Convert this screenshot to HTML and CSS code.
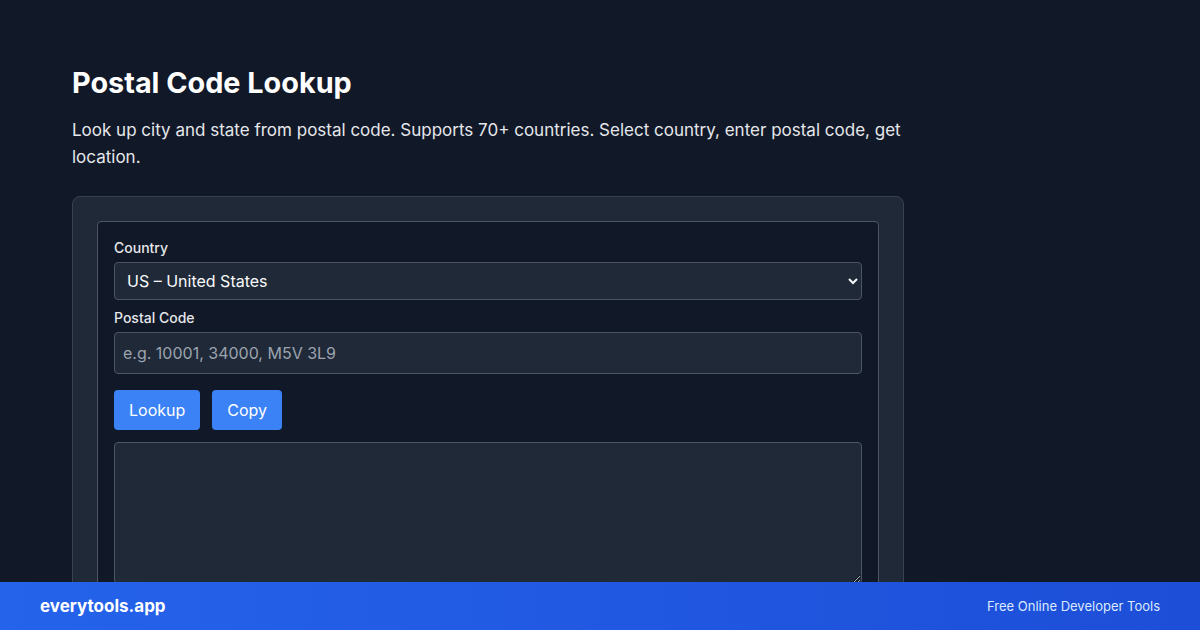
FILE: index.html
```html
<!DOCTYPE html>
<html lang="en">
<head>
    <meta charset="UTF-8">
    <title>Postal Code Lookup</title>
    <link rel="stylesheet" href="styles.css">
</head>
<body>
    <div class="page">
        <h1 class="title">Postal Code Lookup</h1>
        <p class="intro">Look up city and state from postal code. Supports 70+ countries. Select country, enter postal code, get location.</p>

        <div class="card">
            <div class="tool">
                <label class="lbl" for="country">Country</label>
                <select id="country" class="field sel">
                    <option>US – United States</option>
                    <option>CA – Canada</option>
                    <option>GB – United Kingdom</option>
                </select>

                <label class="lbl" for="code">Postal Code</label>
                <input id="code" class="field inp" type="text" placeholder="e.g. 10001, 34000, M5V 3L9">

                <div class="btns">
                    <button class="btn">Lookup</button>
                    <button class="btn">Copy</button>
                </div>

                <textarea class="field out"></textarea>
            </div>
        </div>
    </div>

    <div class="footer">
        <span class="brand">everytools.app</span>
        <span class="tag">Free Online Developer Tools</span>
    </div>
</body>
</html>
```

FILE: styles.css
```css
*
{
    box-sizing: border-box;
}
html, body
{
    margin: 0;
    height: 100%;
    overflow: hidden;
}
body
{
    background: #111827;
    color: #f3f4f6;
    font-family: Inter, "Noto Sans", sans-serif;
}
.page
{
    width: 832px;
    margin-left: 72px;
    padding-top: 66px;
}
.title
{
    margin: 0;
    font-size: 28.8px;
    line-height: 34px;
    font-weight: 700;
    color: #fff;
}
.intro
{
    margin: 17px 0 25px;
    font-size: 17px;
    line-height: 27px;
    color: #e5e7eb;
}
.card
{
    background: #1f2937;
    border: 1px solid #374151;
    border-radius: 8px;
    padding: 24px 24px 0;
}
.tool
{
    background: #111827;
    border: 1px solid #4b5563;
    border-radius: 4px;
    padding: 16px 16px 40px;
}
.lbl
{
    display: block;
    font-size: 14px;
    line-height: 20px;
    font-weight: 500;
    color: #e5e7eb;
    margin-bottom: 4px;
}
.field
{
    display: block;
    width: 100%;
    background: #1f2937;
    border: 1px solid #4b5563;
    border-radius: 4px;
    color: #f9fafb;
    font-family: inherit;
    font-size: 16px;
}
.sel
{
    height: 38px;
    padding: 0 8px;
    margin-bottom: 8px;
}
.inp
{
    height: 42px;
    padding: 0 8px;
    margin-bottom: 16px;
}
.inp::placeholder
{
    color: #9ca3af;
}
.btns
{
    display: flex;
    gap: 12px;
    margin-bottom: 12px;
}
.btn
{
    height: 40px;
    padding: 0 15px;
    background: #3b82f6;
    color: #fff;
    border: none;
    border-radius: 4px;
    font-family: inherit;
    font-size: 16px;
}
.out
{
    height: 142px;
    resize: vertical;
}
.footer
{
    position: fixed;
    left: 0;
    right: 0;
    bottom: 0;
    height: 48px;
    padding: 0 40px;
    display: flex;
    align-items: center;
    justify-content: space-between;
    background: linear-gradient(90deg, #2563eb, #1d4ed8);
}
.brand
{
    font-size: 17px;
    font-weight: 700;
    color: #fff;
}
.tag
{
    font-size: 13px;
    color: #dbeafe;
}
```
